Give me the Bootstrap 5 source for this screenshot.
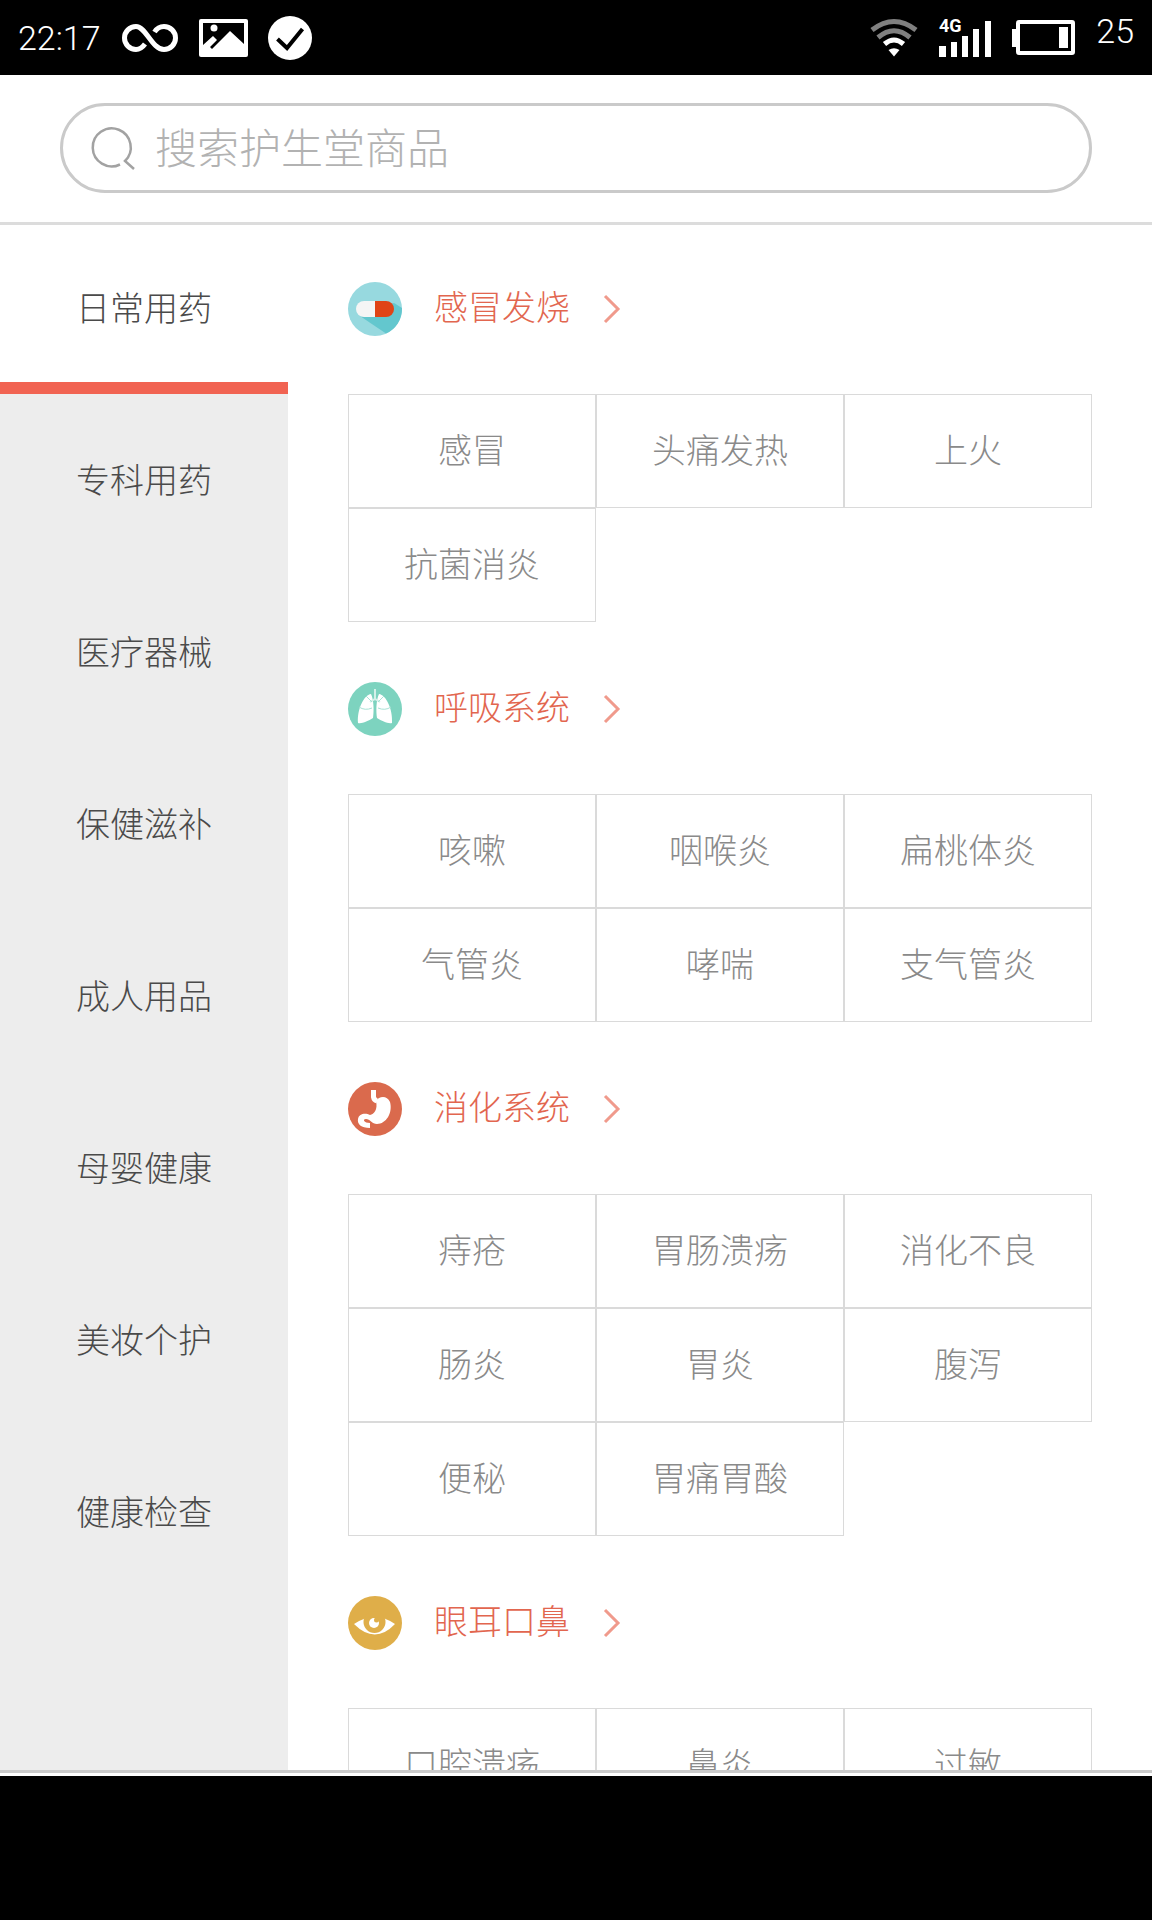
<!DOCTYPE html>
<html lang="zh-CN">
<head>
<meta charset="utf-8">
<meta name="viewport" content="width=device-width, initial-scale=1">
<title>护生堂商品分类</title>
<link href="https://cdn.jsdelivr.net/npm/bootstrap@5.3.0/dist/css/bootstrap.min.css" rel="stylesheet">
<style>
  body { font-family: "Noto Sans CJK SC", sans-serif; font-weight: 300; background: #fff; }
  .status-bar { height: 75px; padding: 0 18px; font: 300 34px/40px Roboto, sans-serif; }
  .status-left { gap: 20px; }
  .status-right { gap: 21px; }
  .charge { padding-bottom: 14px; }
  .search-head { height: 147px; padding: 28px 60px 0; box-shadow: 0 3px 0 #dcdcdc; z-index: 1; }
  .search-box { height: 90px; border: 3px solid #cacaca; padding: 0 29px; gap: 20px; }
  .search-box input { font-size: 42px; font-weight: 300; line-height: 60px; color: #555; outline: 0; margin-bottom: 4px; }
  .search-box input::placeholder { color: #b2b2b2; opacity: 1; }
  .side-menu { width: 25%; background: #ededed; }
  .side-menu a { height: 172px; font-size: 34px; color: #4a4a4a; flex-shrink: 0; padding-bottom: 4px; }
  .side-menu a.active { background: #fff; border-bottom: 12px solid #f16352; padding-top: 12px; }
  .catalog { padding: 0 60px; min-width: 0; }
  .section-title { height: 172px; gap: 32px; font-size: 34px; font-weight: 300; line-height: 50px; color: #e2664f; margin: 0; padding-top: 2px; }
  .section-title a { gap: 34px; }
  .section-title span { padding-bottom: 6px; }
  .tile { height: 114px; border: 1px solid #dadada; font-size: 34px; color: #8a8a8a; padding-bottom: 5px; }
  .bottom-line { height: 6px; border-top: 3px solid #cacaca; }
  .nav-area { height: 144px; }
  svg { flex-shrink: 0; display: block; overflow: visible; }
  .net-label { font: 700 18px Roboto, sans-serif; }
</style>
<script src="https://cdn.jsdelivr.net/npm/bootstrap@5.3.0/dist/js/bootstrap.bundle.min.js"></script>
</head>
<body>
<div class="vh-100 d-flex flex-column overflow-hidden">

  <div class="status-bar bg-black text-white d-flex justify-content-between align-items-center flex-shrink-0">
    <div class="status-left d-flex align-items-center">
      <span>22:17</span>
      <svg width="58" height="30" viewBox="0 0 58 30" fill="none" stroke="#fff" stroke-width="5"><path d="M24 21C21 25 19 26.500 15 26.500A11.500 11.500 0 1 1 15 3.500C25 3.500 31 26.500 43 26.500A11.500 11.500 0 1 0 43 3.500C39 3.500 36 5 33.500 9"/></svg>
      <svg width="49" height="38" viewBox="0 0 49 38"><rect width="49" height="38" rx="2" fill="#fff"/><path d="M4 4H45V25L31 12 13 30 11 28 18 21 14 17 4 26Z" fill="#000"/><circle cx="15" cy="9" r="3.500" fill="#fff"/></svg>
      <svg width="44" height="44" viewBox="0 0 44 44"><circle cx="22" cy="22" r="22" fill="#fff"/><path d="M9.500 23 19 32 34.500 13" fill="none" stroke="#000" stroke-width="4"/></svg>
    </div>
    <div class="status-right d-flex align-items-center">
      <svg width="48" height="38" viewBox="0 0 48 38" fill="none" stroke-width="5"><path d="M2 11Q24 -6 46 11" stroke="#808080"/><path d="M8 18.500Q24 5 40 18.500" stroke="#808080"/><path d="M14.500 25Q24 17 33.500 25" stroke="#fff"/><path d="M18.500 31Q24 27.500 29.500 31L24 37.500Z" fill="#fff"/></svg>
      <svg width="52" height="40" viewBox="0 0 52 40" fill="#fff"><path d="M0 28h7v11H0zM12 24h6v15h-6zM23 18h6v21h-6zM34 11h6v28h-6zM46 3h6v36h-6z"/><text class="net-label" x="0" y="14">4G</text></svg>
      <svg width="63" height="35" viewBox="0 0 63 35"><rect x="6" y="2" width="55" height="31" rx="1" fill="none" stroke="#fff" stroke-width="4"/><path d="M0 9h5v18H0zM47 7h9v21h-9z" fill="#fff"/></svg>
      <span class="charge">25</span>
    </div>
  </div>

  <header class="search-head position-relative bg-white flex-shrink-0">
    <form class="search-box rounded-pill d-flex align-items-center" role="search">
      <svg width="43" height="43" viewBox="0 0 43 43" fill="none" stroke="#a2a2a2" stroke-width="2.500"><path d="M28 37.500A19 19 0 1 1 33 34L42 42"/></svg>
      <input class="border-0 p-0 flex-grow-1 bg-transparent" type="search" placeholder="搜索护生堂商品" aria-label="搜索护生堂商品">
    </form>
  </header>

  <div class="d-flex flex-grow-1 overflow-hidden">
    <nav class="side-menu d-flex flex-column flex-shrink-0">
      <a href="#" class="active d-flex align-items-center justify-content-center text-decoration-none" aria-current="page">日常用药</a>
      <a href="#" class="d-flex align-items-center justify-content-center text-decoration-none">专科用药</a>
      <a href="#" class="d-flex align-items-center justify-content-center text-decoration-none">医疗器械</a>
      <a href="#" class="d-flex align-items-center justify-content-center text-decoration-none">保健滋补</a>
      <a href="#" class="d-flex align-items-center justify-content-center text-decoration-none">成人用品</a>
      <a href="#" class="d-flex align-items-center justify-content-center text-decoration-none">母婴健康</a>
      <a href="#" class="d-flex align-items-center justify-content-center text-decoration-none">美妆个护</a>
      <a href="#" class="d-flex align-items-center justify-content-center text-decoration-none">健康检查</a>
    </nav>

    <main class="catalog flex-grow-1">
      <section>
        <h2 class="section-title d-flex align-items-center">
          <svg width="54" height="54" viewBox="0 0 54 54"><circle cx="27" cy="27" r="27" fill="#97d9df"/><path d="M12 34 38 51.500A27 27 0 0 0 54 26L46 21Z" fill="#63c7ce"/><path d="M27 19H16a8 8 0 0 0 0 16H27Z" fill="#f5f5f5"/><path d="M27 19H38a8 8 0 0 1 0 16H27Z" fill="#e04416"/></svg>
          <a href="#" class="d-flex align-items-center text-reset text-decoration-none"><span>感冒发烧</span>
            <svg width="16" height="28" viewBox="0 0 16 28" fill="none" stroke="#f09a8c" stroke-width="3"><path d="M1 1 14 14 1 27"/></svg></a>
        </h2>
        <div class="row g-0">
          <a href="#" class="tile col-4 d-flex align-items-center justify-content-center text-decoration-none">感冒</a>
          <a href="#" class="tile col-4 d-flex align-items-center justify-content-center text-decoration-none">头痛发热</a>
          <a href="#" class="tile col-4 d-flex align-items-center justify-content-center text-decoration-none">上火</a>
          <a href="#" class="tile col-4 d-flex align-items-center justify-content-center text-decoration-none">抗菌消炎</a>
        </div>
      </section>

      <section>
        <h2 class="section-title d-flex align-items-center">
          <svg width="54" height="54" viewBox="0 0 54 54"><circle cx="27" cy="27" r="27" fill="#7dd3bf"/><path d="M23 12C16 13 9 27 10 41 14 42 20 39 25 36 26 30 26 18 23 12ZM31 12C38 13 45 27 44 41 40 42 34 39 29 36 28 30 28 18 31 12Z" fill="#fff"/><path d="M27 7V18M22 20 27 17 32 20" fill="none" stroke="#d4f0e9" stroke-width="2"/><path d="M11 25Q17 29 24 26M43 25Q37 29 30 26M24 20 18 14M30 20 36 14" fill="none" stroke="#a9e2d5" stroke-width="1"/></svg>
          <a href="#" class="d-flex align-items-center text-reset text-decoration-none"><span>呼吸系统</span>
            <svg width="16" height="28" viewBox="0 0 16 28" fill="none" stroke="#f09a8c" stroke-width="3"><path d="M1 1 14 14 1 27"/></svg></a>
        </h2>
        <div class="row g-0">
          <a href="#" class="tile col-4 d-flex align-items-center justify-content-center text-decoration-none">咳嗽</a>
          <a href="#" class="tile col-4 d-flex align-items-center justify-content-center text-decoration-none">咽喉炎</a>
          <a href="#" class="tile col-4 d-flex align-items-center justify-content-center text-decoration-none">扁桃体炎</a>
          <a href="#" class="tile col-4 d-flex align-items-center justify-content-center text-decoration-none">气管炎</a>
          <a href="#" class="tile col-4 d-flex align-items-center justify-content-center text-decoration-none">哮喘</a>
          <a href="#" class="tile col-4 d-flex align-items-center justify-content-center text-decoration-none">支气管炎</a>
        </div>
      </section>

      <section>
        <h2 class="section-title d-flex align-items-center">
          <svg width="54" height="54" viewBox="0 0 54 54"><circle cx="27" cy="27" r="27" fill="#da6a4d"/><path d="M25.500 8V15Q26 18 29 19" fill="none" stroke="#fff" stroke-width="5"/><path d="M28 19C31 14 39 13 42 20 45 31 38 42 29 42 24 42 22 37 18 37 14 37 16 41 22 41V46C13 46 9 42 10 37 11 31 18 31 22 33 26 32 30 28 28 19Z" fill="#fff"/></svg>
          <a href="#" class="d-flex align-items-center text-reset text-decoration-none"><span>消化系统</span>
            <svg width="16" height="28" viewBox="0 0 16 28" fill="none" stroke="#f09a8c" stroke-width="3"><path d="M1 1 14 14 1 27"/></svg></a>
        </h2>
        <div class="row g-0">
          <a href="#" class="tile col-4 d-flex align-items-center justify-content-center text-decoration-none">痔疮</a>
          <a href="#" class="tile col-4 d-flex align-items-center justify-content-center text-decoration-none">胃肠溃疡</a>
          <a href="#" class="tile col-4 d-flex align-items-center justify-content-center text-decoration-none">消化不良</a>
          <a href="#" class="tile col-4 d-flex align-items-center justify-content-center text-decoration-none">肠炎</a>
          <a href="#" class="tile col-4 d-flex align-items-center justify-content-center text-decoration-none">胃炎</a>
          <a href="#" class="tile col-4 d-flex align-items-center justify-content-center text-decoration-none">腹泻</a>
          <a href="#" class="tile col-4 d-flex align-items-center justify-content-center text-decoration-none">便秘</a>
          <a href="#" class="tile col-4 d-flex align-items-center justify-content-center text-decoration-none">胃痛胃酸</a>
        </div>
      </section>

      <section>
        <h2 class="section-title d-flex align-items-center">
          <svg width="54" height="54" viewBox="0 0 54 54"><circle cx="27" cy="27" r="27" fill="#dfae49"/><path d="M6 28Q27 14 47 28 27 49 6 28Z" fill="#fff"/><circle cx="26.500" cy="26" r="11" fill="#dfae49"/><circle cx="26" cy="27" r="5" fill="#fff"/><circle cx="28.500" cy="24" r="2.500" fill="#dfae49"/></svg>
          <a href="#" class="d-flex align-items-center text-reset text-decoration-none"><span>眼耳口鼻</span>
            <svg width="16" height="28" viewBox="0 0 16 28" fill="none" stroke="#f09a8c" stroke-width="3"><path d="M1 1 14 14 1 27"/></svg></a>
        </h2>
        <div class="row g-0">
          <a href="#" class="tile col-4 d-flex align-items-center justify-content-center text-decoration-none">口腔溃疡</a>
          <a href="#" class="tile col-4 d-flex align-items-center justify-content-center text-decoration-none">鼻炎</a>
          <a href="#" class="tile col-4 d-flex align-items-center justify-content-center text-decoration-none">过敏</a>
        </div>
      </section>
    </main>
  </div>

  <div class="bottom-line flex-shrink-0"></div>
  <div class="nav-area bg-black flex-shrink-0"></div>
</div>
</body>
</html>
